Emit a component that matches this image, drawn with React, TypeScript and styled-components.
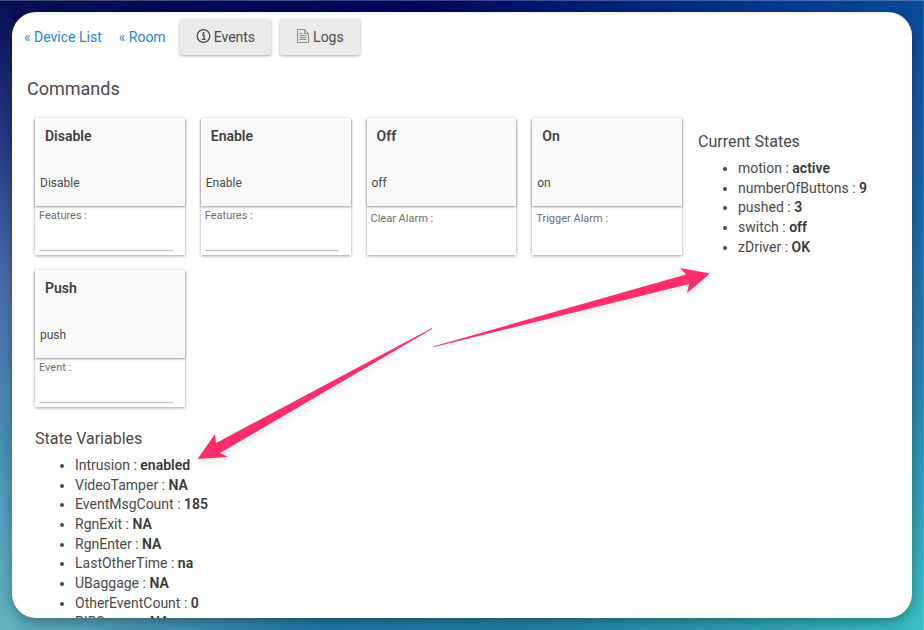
import React from "react";
import styled, { createGlobalStyle } from "styled-components";

const Global = createGlobalStyle`
  * { box-sizing: border-box; }
  body { margin: 0; font-family: Roboto, "Liberation Sans", sans-serif; color: #4a4a4a; overflow: hidden; }
  h2, h3, ul, p { margin: 0; font-weight: 400; }
`;

const Desktop = styled.div`
  height: 100vh;
  padding: 12px;
  box-shadow: inset 0 1px 0 rgba(255, 255, 255, 0.25), inset -1px 0 0 rgba(255, 255, 255, 0.15);
  background:
    linear-gradient(180deg, #0a0f55 0%, #243a85 22%, #4a6cab 45%, #4a8fb5 70%, #62b2bf 100%) left / 12px 100% no-repeat,
    linear-gradient(180deg, #0a4a98 0%, #1c63a2 30%, #2a80ad 60%, #3abfc2 100%) right / 12px 100% no-repeat,
    linear-gradient(90deg, #0b0f52 0%, #01045a 45%, #033a90 85%, #0a4a98 100%) top / 100% 50% no-repeat,
    linear-gradient(90deg, #62b2bf 0%, #2178a6 35%, #2585a8 60%, #3abfc2 100%) bottom / 100% 50% no-repeat;
`;

const Panel = styled.main`
  position: relative;
  height: 100%;
  overflow: hidden;
  border-radius: 24px;
  border-top: 3px solid #f5f5f5;
  background: #fff;
  box-shadow: 0 5px 12px rgba(0, 0, 0, 0.3);
`;

const Toolbar = styled.nav`
  display: flex;
  align-items: center;
  gap: 9px;
  padding: 4px 12px 0;
`;

const NavLinks = styled.div`
  display: flex;
  gap: 17px;
  margin-right: 5px;
`;

const NavLink = styled.a`
  font-size: 14px;
  line-height: 20px;
  color: #2a86d6;
  text-decoration: none;
`;

const ToolButton = styled.button`
  display: flex;
  align-items: center;
  gap: 3px;
  height: 36px;
  padding: 0 16px;
  border: 0;
  border-radius: 2px;
  background: #ebebeb;
  box-shadow: 0 1px 3px rgba(0, 0, 0, 0.35);
  font: 14px Roboto, sans-serif;
  color: #4a4a4a;
`;

const PageTitle = styled.h2`
  padding: 21px 15px 0;
  font-size: 18px;
  line-height: 26px;
`;

const Columns = styled.div`
  display: grid;
  grid-template-columns: minmax(0, 647px) 1fr;
  gap: 0 16px;
  padding: 16px 0 0 23px;
`;

const CardGrid = styled.div`
  display: grid;
  grid-template-columns: repeat(4, 1fr);
  gap: 15px 16px;
`;

const Card = styled.form`
  height: 137px;
  background: #fff;
  box-shadow: 0 1px 3px rgba(0, 0, 0, 0.38);
`;

const CommandButton = styled.button`
  display: flex;
  flex-direction: column;
  justify-content: space-between;
  width: 100%;
  height: 88px;
  padding: 8px 5px 14px;
  border: 0;
  background: #fafafa;
  box-shadow: 0 1px 2px rgba(0, 0, 0, 0.4);
  font: 12px/18px Roboto, sans-serif;
  color: #4a4a4a;
  text-align: left;
`;

const CommandName = styled.strong`
  padding-left: 5px;
  font-size: 14px;
  line-height: 20px;
  font-weight: 600;
  color: #404040;
`;

const Field = styled.label<{ $plain?: boolean }>`
  display: flex;
  flex-direction: column;
  padding: ${(p) => (p.$plain ? "6px" : "3px")} 4px 0;
  font-size: 11px;
  line-height: 14px;
  color: #6e6e6e;
`;

const FieldInput = styled.input`
  width: 134px;
  height: 28px;
  padding: 0;
  border: 0;
  border-bottom: 1px solid #bdbdbd;
  background: transparent;
  outline: 0;
`;

const Section = styled.section<{ $side?: boolean }>`
  padding-top: ${(p) => (p.$side ? "12px" : "20px")};
`;

const SectionTitle = styled.h3`
  font-size: 16px;
  line-height: 24px;
`;

const StateList = styled.ul`
  padding: 4px 0 0 40px;
  font-size: 14px;
  line-height: 20px;
`;

const StateItem = styled.li`
  height: 20px;
  &:nth-child(3n + 2) { height: 19px; }
`;

const Value = styled.strong`
  font-weight: 600;
  color: #383838;
`;

const Arrows = styled.svg`
  position: absolute;
  top: 245px;
  left: 180px;
  filter: drop-shadow(0 4px 4px rgba(0, 0, 0, 0.08));
  pointer-events: none;
`;

type State = [string, string];

const commands = [
  { name: "Disable", action: "Disable", field: "Features :", input: true },
  { name: "Enable", action: "Enable", field: "Features :", input: true },
  { name: "Off", action: "off", field: "Clear Alarm :", input: false },
  { name: "On", action: "on", field: "Trigger Alarm :", input: false },
  { name: "Push", action: "push", field: "Event :", input: true },
];

const currentStates: State[] = [
  ["motion", "active"], ["numberOfButtons", "9"], ["pushed", "3"], ["switch", "off"], ["zDriver", "OK"],
];

const stateVariables: State[] = [
  ["Intrusion", "enabled"], ["VideoTamper", "NA"], ["EventMsgCount", "185"], ["RgnExit", "NA"],
  ["RgnEnter", "NA"], ["LastOtherTime", "na"], ["UBaggage", "NA"], ["OtherEventCount", "0"], ["PIRSensor", "NA"],
];

const States = ({ items }: { items: State[] }) => (
  <StateList>
    {items.map(([name, value]) => (
      <StateItem key={name}>{name} : <Value>{value}</Value></StateItem>
    ))}
  </StateList>
);

const InfoIcon = () => (
  <svg width="15" height="16" viewBox="0 0 15 16" fill="none" aria-hidden="true">
    <circle cx="7.5" cy="7" r="6.3" stroke="#444" strokeWidth="1.2" />
    <circle cx="7.5" cy="4" r="1" fill="#444" />
    <path d="M6 6.2h2v4M5.8 10.4h3.6" stroke="#444" strokeWidth="1.3" />
  </svg>
);

const FileIcon = () => (
  <svg width="14" height="16" viewBox="0 0 14 16" fill="none" stroke="#8c8c8c" aria-hidden="true">
    <path d="M1.500 .5h7.200l3.800 3.800V13.500h-11zM8.500 .5v4h4M3.500 4.500h3M3.500 6.500h7M3.500 8.500h7M3.500 10.500h7" />
  </svg>
);

export default function App() {
  return (
    <Desktop>
      <Global />
      <Panel>
        <Toolbar>
          <NavLinks>
            <NavLink href="#devices">« Device List</NavLink>
            <NavLink href="#room">« Room</NavLink>
          </NavLinks>
          <ToolButton type="button"><InfoIcon />Events</ToolButton>
          <ToolButton type="button"><FileIcon />Logs</ToolButton>
        </Toolbar>
        <PageTitle>Commands</PageTitle>
        <Columns>
          <div>
            <CardGrid>
              {commands.map((c) => (
                <Card key={c.name}>
                  <CommandButton type="button">
                    <CommandName>{c.name}</CommandName>
                    <span>{c.action}</span>
                  </CommandButton>
                  <Field as={c.input ? "label" : "div"} $plain={!c.input}>
                    {c.field}
                    {c.input && <FieldInput type="text" />}
                  </Field>
                </Card>
              ))}
            </CardGrid>
            <Section>
              <SectionTitle>State Variables</SectionTitle>
              <States items={stateVariables} />
            </Section>
          </div>
          <Section $side>
            <SectionTitle>Current States</SectionTitle>
            <States items={currentStates} />
          </Section>
        </Columns>
        <Arrows width="540" height="215" viewBox="192 260 540 215" fill="#ff2d6b" aria-hidden="true">
          <path d="M432 328L216 443L215 434L197.500 459L228 457L220 453L432 329Z" />
          <path d="M433 346.500L686 274.500L680 268L710 273.500L687 293L689 284L434 347Z" />
        </Arrows>
      </Panel>
    </Desktop>
  );
}
